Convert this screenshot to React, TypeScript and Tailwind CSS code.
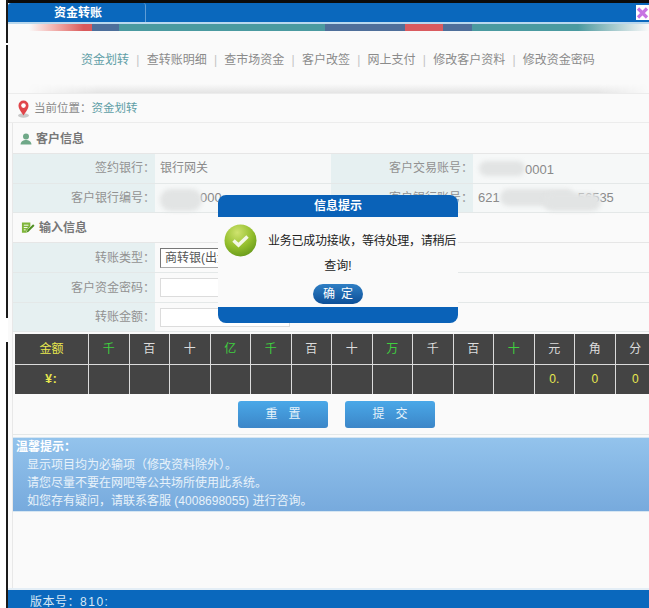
import React from "react";

const font = { fontFamily: '"Liberation Sans","Noto Sans CJK SC",sans-serif' };
const COLON = "\uFF1A";
const COMMA = "\uFF0C";
const LP = "\uFF08";
const RP = "\uFF09";

function PinIcon() {
  return (
    <svg width="13" height="18" viewBox="0 0 13 18">
      <ellipse cx="6.500" cy="15.500" rx="5.500" ry="2.200" fill="#c9c9c9" />
      <path d="M6.500 15.500C4 11.500 1.500 9 1.500 5.600a5 5 0 0 1 10 0C11.500 9 9 11.500 6.500 15.500z" fill="#e0454a" />
      <circle cx="6.500" cy="5.600" r="2.300" fill="#fff" />
    </svg>
  );
}

function UserIcon() {
  return (
    <svg width="12" height="12" viewBox="0 0 12 12">
      <circle cx="6" cy="3.500" r="3" fill="#6fa888" />
      <path d="M0.500 11.500C1 8 3.500 7 6 7s5 1 5.500 4.500z" fill="#6fa888" />
    </svg>
  );
}

function EditIcon() {
  return (
    <svg width="14" height="14" viewBox="0 0 15 14">
      <path d="M1 1h9v4l-4 5v2H1z" fill="#7fb53a" />
      <path d="M3 4h5M3 6.500h4M3 9h2" stroke="#fff" strokeWidth="1" />
      <path d="M6 12l1-3 6-6 1.500 1.500-6 6z" fill="#4f8f22" />
    </svg>
  );
}

function CheckBall() {
  return (
    <svg width="33" height="33" viewBox="0 0 33 33">
      <defs>
        <radialGradient id="ball" cx="0.4" cy="0.25" r="0.85">
          <stop offset="0" stopColor="#cfe36f" />
          <stop offset="0.55" stopColor="#93be2c" />
          <stop offset="1" stopColor="#5f9318" />
        </radialGradient>
      </defs>
      <circle cx="16.500" cy="16.500" r="16" fill="url(#ball)" />
      <path d="M9.500 16.500l5 4.500 9-8.500" fill="none" stroke="#f4f8e6" strokeWidth="3.500" />
    </svg>
  );
}

function CloseIcon() {
  return (
    <svg width="13" height="14" viewBox="0 0 13 14">
      <path d="M2 2.500l9 9M11 2.500l-9 9" stroke="#c873e2" strokeWidth="3.200" />
    </svg>
  );
}

function Blur({ className }: { className: string }) {
  return <div className={`absolute bg-[#e2e4e4] blur-[2px] ${className}`} />;
}

function InfoCell({ label, children }: { label: string; children?: React.ReactNode }) {
  return (
    <>
      <div className="flex items-center justify-end bg-[#e6f0f1] text-[12px] text-[#929292]">
        {label}
        {COLON}
      </div>
      <div className="relative flex items-center bg-[#f6f8f8] pl-[5px] text-[12px] text-[#8a8a8a]">{children}</div>
    </>
  );
}

const heads = [
  ["千", "g"], ["百", "w"], ["十", "w"], ["亿", "g"], ["千", "g"], ["百", "w"], ["十", "w"],
  ["万", "g"], ["千", "w"], ["百", "w"], ["十", "g"], ["元", "w"], ["角", "w"], ["分", "w"],
];
const vals = ["", "", "", "", "", "", "", "", "", "", "", "0.", "0", "0"];
const navItems = ["查转账明细", "查市场资金", "客户改签", "网上支付", "修改客户资料", "修改资金密码"];

export default function App() {
  return (
    <div className="relative flex h-[608px] w-[649px] overflow-hidden bg-white" style={font}>
      <div className="w-[6px] shrink-0 bg-white" />
      <div className="flex w-[2px] shrink-0 flex-col">
        <div className="h-[43px] bg-[#1a1a1a]" />
        <div className="h-[2px]" />
        <div className="h-[273px] bg-[#1a1a1a]" />
        <div className="h-[24px]" />
        <div className="flex-1 bg-[#1a1a1a]" />
      </div>
      <div className="flex min-w-0 flex-1 flex-col bg-[#fafafa]">
        <div className="h-[3px] bg-[#0c0c0c]" />
        <div className="flex h-[19px] rounded-tl-[3px] bg-[#0a68bd]">
          <div className="flex w-[138px] items-center rounded-tr-[3px] border-r border-[#5f9dd6] pl-[46px] text-[12px] font-bold text-white">
            资金转账
          </div>
          <div className="flex-1" />
          <div className="flex h-[15px] w-[13px] items-center justify-center self-center bg-white">
            <CloseIcon />
          </div>
        </div>
        <div className="h-[2px] bg-[#b9d8ee]" />
        <div className="flex h-[7px]">
          <div className="w-[84px] bg-gradient-to-r from-[#fafafa] from-25% to-[#d9595b] to-90%" />
          <div className="w-[27px] bg-[#4d6f9b]" />
          <div className="w-[206px] bg-[#4a9aa0]" />
          <div className="w-[80px] bg-[#4f6f9a]" />
          <div className="w-[38px] bg-[#d95b5f]" />
          <div className="w-[29px] bg-[#4f6f9a]" />
          <div className="flex-1 bg-gradient-to-r from-[#4a9aa0] from-60% to-[#fafafa]" />
        </div>
        <div className="flex h-[53px] items-center pl-[73px] pt-[5px] text-[12px] text-[#8b8b8b]">
          <span className="text-[#5f9ea6]">资金划转</span>
          {navItems.map((n) => (
            <React.Fragment key={n}>
              <span className="mx-[7.25px] text-[#c4c4c4]">|</span>
              <span>{n}</span>
            </React.Fragment>
          ))}
        </div>
        <div className="h-[9px] bg-gradient-to-b from-[#fafafa] to-[#e4e4e4] [mask-image:linear-gradient(to_right,transparent_3%,black_14%,black_92%,transparent)]" />
        <div className="flex h-[30px] items-center gap-[4px] border-y border-[#ececec] pl-[9px] pt-[1px] text-[11.5px] text-[#8a8a8a]">
          <PinIcon />
          <span>
            当前位置{COLON}
            <span className="text-[#5f9ea6]">资金划转</span>
          </span>
        </div>
        <div className="ml-[4px] flex flex-1 flex-col border-l border-[#e8e8e8]">
          <div className="flex h-[31px] items-center gap-[4px] border-b border-[#e6e6e6] pl-[7px] pt-[1px] text-[12px] font-bold text-[#777]">
            <UserIcon />
            客户信息
          </div>
          <div className="grid h-[59px] grid-cols-[142px_176px_142px_1fr] grid-rows-2 gap-y-px border-b border-[#e4e8e8] bg-[#e4e8e8]">
            <InfoCell label="签约银行">银行网关</InfoCell>
            <InfoCell label="客户交易账号">
              <Blur className="left-[6px] top-[7px] h-[15px] w-[46px] rounded-full" />
              <span className="pl-[47px] pt-[2px] text-[13px]">0001</span>
            </InfoCell>
            <InfoCell label="客户银行编号">
              <Blur className="left-[5px] top-[5px] h-[22px] w-[42px] rounded-full" />
              <span className="pl-[40px] text-[13px]">000</span>
            </InfoCell>
            <InfoCell label="客户银行账号">
              <span className="text-[13px]">621</span>
              <span className="pl-[78px] text-[13px]">56535</span>
              <Blur className="left-[27px] top-[5px] h-[17px] w-[75px] rounded-full" />
              <Blur className="left-[70px] top-[9px] h-[18px] w-[58px] rounded-full" />
            </InfoCell>
          </div>
          <div className="flex h-[30px] items-center gap-[4px] border-b border-[#e6e6e6] pl-[8px] text-[12px] font-bold text-[#777]">
            <EditIcon />
            输入信息
          </div>
          <div className="flex h-[30px] border-b border-[#e4e8e8]">
            <div className="flex w-[142px] items-center justify-end bg-[#e6f0f1] text-[12px] text-[#929292]">转账类型{COLON}</div>
            <div className="flex flex-1 items-center pl-[5px]">
              <div className="flex h-[20px] w-[130px] items-center border border-[#aaa] border-l-[#777] border-t-[#777] bg-white pl-[4px] text-[12px] text-[#555]">
                商转银(出金)
              </div>
            </div>
          </div>
          <div className="flex h-[30px] border-b border-[#e4e8e8]">
            <div className="flex w-[142px] items-center justify-end bg-[#e6f0f1] text-[12px] text-[#929292]">客户资金密码{COLON}</div>
            <div className="flex flex-1 items-center pl-[5px]">
              <div className="h-[19px] w-[130px] border border-[#dcdcdc] bg-white" />
            </div>
          </div>
          <div className="flex h-[29px] border-b border-[#e4e8e8]">
            <div className="flex w-[142px] items-center justify-end bg-[#e6f0f1] text-[12px] text-[#929292]">转账金额{COLON}</div>
            <div className="flex flex-1 items-center pl-[5px]">
              <div className="h-[19px] w-[130px] border border-[#dcdcdc] bg-white" />
            </div>
          </div>
          <div className="ml-[2px] mt-[2px] grid h-[60px] w-[640px] shrink-0 grid-cols-[73px_repeat(14,39.5px)] grid-rows-2 gap-[1px] bg-[#dcdcdc] text-[12px]">
            <div className="flex items-center justify-center bg-[#444] text-[#e8e84f]">金额</div>
            {heads.map(([t, c], i) => (
              <div key={i} className={`flex items-center justify-center bg-[#444] ${c === "g" ? "text-[#3fcf3f]" : "text-[#ddd]"}`}>
                {t}
              </div>
            ))}
            <div className="flex items-center justify-center bg-[#444] font-bold tracking-[1px] text-[#e8e84f]">¥:</div>
            {vals.map((v, i) => (
              <div key={i} className="flex items-center justify-center bg-[#444] text-[#e8e84f]">
                {v}
              </div>
            ))}
          </div>
          <div className="flex h-[41px] shrink-0 items-center justify-center gap-[17px] border-b border-[#e4e8e8] pl-[11px]">
            <div className="flex h-[27px] w-[90px] items-center justify-center rounded-[3px] bg-gradient-to-b from-[#4aa8e8] to-[#3c86c8] pl-[11px] text-[12px] tracking-[11px] text-[#e6f3fb]">
              重置
            </div>
            <div className="flex h-[27px] w-[90px] items-center justify-center rounded-[3px] bg-gradient-to-b from-[#4aa8e8] to-[#3c86c8] pl-[11px] text-[12px] tracking-[11px] text-[#e6f3fb]">
              提交
            </div>
          </div>
          <div className="mt-[2px] h-[75px] shrink-0 border-y border-[#d6e6f2] bg-gradient-to-b from-[#93c3ec] to-[#77aadd] pl-[3px] text-[12px] leading-[18px] text-[#e8f2fa]">
            <div className="font-bold text-white">温馨提示{COLON}</div>
            <div className="pl-[11px]">显示项目均为必输项{LP}修改资料除外{RP}。</div>
            <div className="pl-[11px]">请您尽量不要在网吧等公共场所使用此系统。</div>
            <div className="pl-[11px]">如您存有疑问{COMMA}请联系客服 (4008698055) 进行咨询。</div>
          </div>
          <div className="flex-1" />
        </div>
        <div className="h-[2px] shrink-0 bg-[#e4eef6]" />
        <div className="h-[18px] shrink-0 bg-[#0a68bd] pl-[22px] pt-[6px] text-[12px] leading-[12px] tracking-[0.5px] text-[#d8e8f5]">
          版本号{COLON}<span className="tracking-[1.5px]">810:</span>
        </div>
      </div>

      <div className="absolute left-[218px] top-[195px] flex h-[128px] w-[240px] flex-col overflow-hidden rounded-[8px] bg-[#fafafa]">
        <div className="flex h-[22px] shrink-0 items-center justify-center bg-[#0a62b8] text-[12px] font-bold text-white">信息提示</div>
        <div className="relative flex-1 text-[12px] text-[#222]">
          <div className="absolute left-[6px] top-[7px]">
            <CheckBall />
          </div>
          <div className="whitespace-nowrap pl-[50px] pt-[12px] leading-[25px] tracking-[-0.25px]">
            业务已成功接收{COMMA}等待处理{COMMA}请稍后
          </div>
          <div className="text-center leading-[25px]">查询!</div>
          <div className="mx-auto mt-[5px] flex h-[20px] w-[50px] items-center justify-center rounded-full bg-gradient-to-b from-[#2f7fc4] to-[#0c4f98] pl-[6px] text-[12px] tracking-[6px] text-white">
            确定
          </div>
        </div>
        <div className="h-[16px] shrink-0 bg-[#0a62b8]" />
      </div>
    </div>
  );
}
